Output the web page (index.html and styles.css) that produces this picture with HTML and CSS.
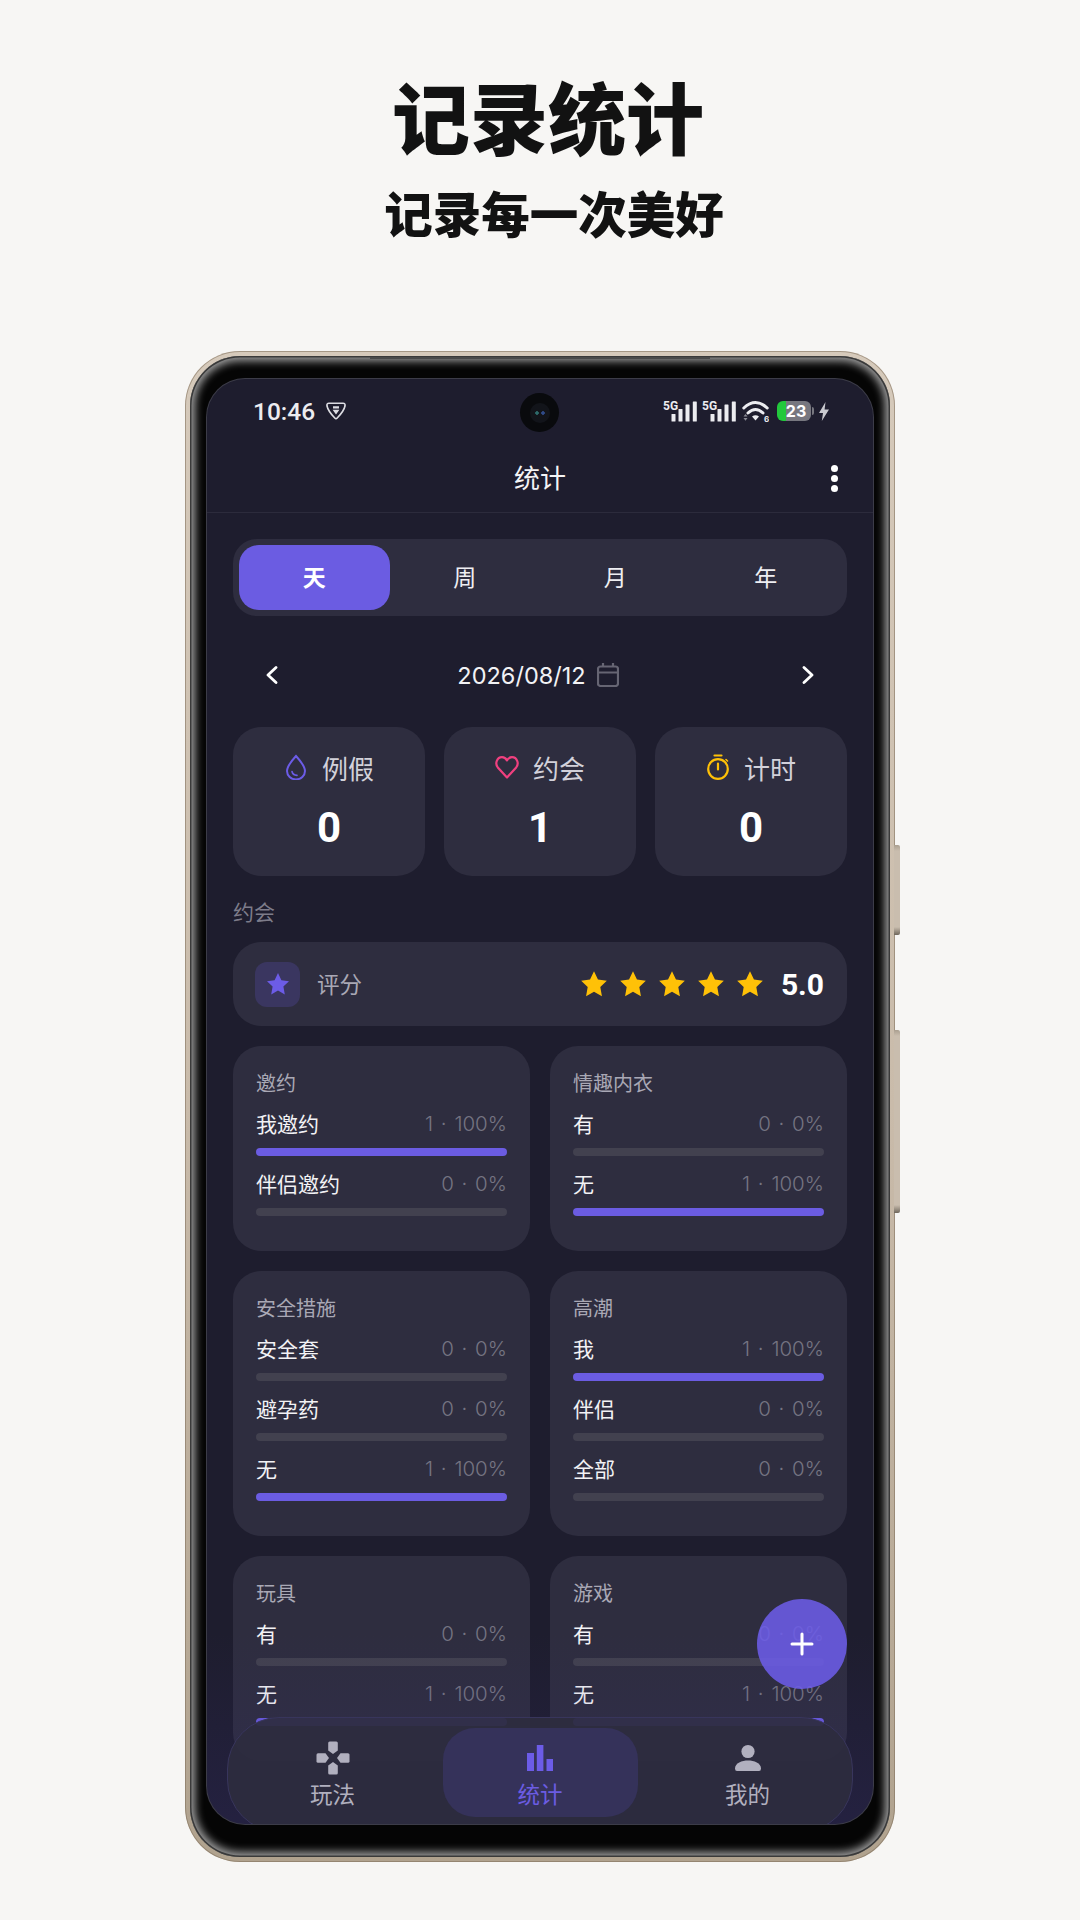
FILE: index.html
```html
<!DOCTYPE html>
<html lang="zh-CN">
<head>
    <meta charset="UTF-8">
    <meta name="viewport" content="width=device-width, initial-scale=1.0">
    <title>记录统计</title>
    <link rel="stylesheet" href="styles.css">
</head>
<body>
    <header class="promo">
        <h1>记录统计</h1>
        <h2>记录每一次美好</h2>
    </header>

    <div class="phone">
        <span class="side-btn side-btn-a"></span>
        <span class="side-btn side-btn-b"></span>
        <div class="bezel">
            <div class="screen">
                <div class="status-bar">
                    <div class="status-left">
                        <span class="clock">10:46</span>
                        <svg width="20" height="18" viewBox="0 0 20 18"><path d="M3 1.2H17Q19.4 1.2 19 4Q18 9 11.2 16Q10 17.4 8.8 16Q2 9 1 4Q.6 1.2 3 1.2Z" fill="none" stroke="#dcdce2" stroke-width="1.6"/><path d="M7 4.2H13V6.4H7ZM6.6 7.8H13.4L10 12.6Z" fill="#dcdce2"/></svg>
                    </div>
                    <div class="camera"><span class="lens"></span></div>
                    <div class="status-right">
                        <svg class="signal" width="34" height="22" viewBox="0 0 34 22"><text x="0" y="9.5">5G</text><rect x="8.5" y="14" width="4" height="7.5" rx=".6"/><rect x="15.5" y="9" width="4" height="12.5" rx=".6"/><rect x="22.5" y="4.5" width="4" height="17" rx=".6"/><rect x="29.8" y="1.5" width="4" height="20" rx=".6"/></svg>
                        <svg class="signal" width="34" height="22" viewBox="0 0 34 22"><text x="0" y="9.5">5G</text><rect x="8.5" y="14" width="4" height="7.5" rx=".6"/><rect x="15.5" y="9" width="4" height="12.5" rx=".6"/><rect x="22.5" y="4.5" width="4" height="17" rx=".6"/><rect x="29.8" y="1.5" width="4" height="20" rx=".6"/></svg>
                        <svg class="wifi" width="27" height="22" viewBox="0 0 27 22"><path d="M1.8 8Q13.5 -3 25.2 8M6 13Q13.5 6 21 13" fill="none" stroke="#ececf0" stroke-width="3" stroke-linecap="round"/><path d="M10 16.5Q13.5 14 17 16.5L13.5 20.5Z" fill="#ececf0"/><path d="M1.5 16.5L3.5 14L5.5 16.5ZM1.5 18H5.5L3.5 20.8Z" fill="#8b8b95"/><text x="22" y="21.5">6</text></svg>
                        <div class="battery">23</div>
                        <svg width="10" height="19" viewBox="0 0 10 19"><path d="M6.5 0L0 11H4L2.8 19L10 7.5H5.6Z" fill="#c9c9cf"/></svg>
                    </div>
                </div>

                <div class="app-bar">
                    <span></span>
                    <span class="app-title">统计</span>
                    <div class="more"><i></i><i></i><i></i></div>
                </div>

                <main class="content">
                    <div class="tabs">
                        <div class="tab tab-on">天</div>
                        <div class="tab">周</div>
                        <div class="tab">月</div>
                        <div class="tab">年</div>
                    </div>

                    <div class="date-row">
                        <svg width="13" height="18" viewBox="0 0 13 18"><path d="M11 1.5L3 9L11 16.5" fill="none" stroke="#fff" stroke-width="2.8" stroke-linecap="round" stroke-linejoin="round"/></svg>
                        <div class="date-mid">
                            <span>2026/08/12</span>
                            <svg width="22" height="24" viewBox="0 0 22 24" fill="none" stroke="#666573" stroke-width="2.2"><rect x="1" y="3.5" width="20" height="19.5" rx="2.5"/><path d="M1 9.5H21M6 0V4M16 0V4"/></svg>
                        </div>
                        <svg width="13" height="18" viewBox="0 0 13 18"><path d="M2 1.5L10 9L2 16.5" fill="none" stroke="#fff" stroke-width="2.8" stroke-linecap="round" stroke-linejoin="round"/></svg>
                    </div>

                    <div class="stats">
                        <div class="stat">
                            <div class="stat-head">
                                <svg width="24" height="26" viewBox="0 0 24 26" fill="none" stroke="#6c5ce7" stroke-width="2"><path d="M12 2Q3 12 3 17A9 8.4 0 0 0 21 17Q21 12 12 2Z"/><path d="M8 17.5Q8.6 21 13 21.4" stroke-width="1.6" stroke-linecap="round"/></svg>
                                <span>例假</span>
                            </div>
                            <div class="stat-num">0</div>
                        </div>
                        <div class="stat">
                            <div class="stat-head">
                                <svg width="24" height="26" viewBox="0 0 24 26" fill="none" stroke="#f0407f" stroke-width="2.2"><path d="M12 23.5L2.8 13.4C-.4 9.4 2 3.2 7 3.2C9.4 3.2 11 4.6 12 6.4C13 4.6 14.6 3.2 17 3.2C22 3.2 24.4 9.4 21.2 13.4Z" stroke-linejoin="round"/></svg>
                                <span>约会</span>
                            </div>
                            <div class="stat-num">1</div>
                        </div>
                        <div class="stat">
                            <div class="stat-head">
                                <svg width="24" height="26" viewBox="0 0 24 26" fill="none" stroke="#ffc107" stroke-width="2.2"><circle cx="12" cy="15" r="9.8"/><path d="M8.5 1.5H15.5M12 9.5V15.5" stroke-linecap="round"/><path d="M20 5.5L21.5 7" stroke-linecap="round" stroke-width="1.6"/></svg>
                                <span>计时</span>
                            </div>
                            <div class="stat-num">0</div>
                        </div>
                    </div>

                    <div class="section-label">约会</div>

                    <div class="rating">
                        <div class="rating-icon">
                            <svg width="24" height="24" viewBox="0 0 24 24"><path d="M12 1l3.4 7.2 7.6 1-5.6 5.4 1.4 7.8L12 18.6 5.2 22.4l1.4-7.8L1 9.2l7.6-1z" fill="#6c5ce7"/></svg>
                        </div>
                        <span class="rating-name">评分</span>
                        <div class="stars">
                            <svg width="28" height="28" viewBox="0 0 24 24"><path d="M12 1l3.4 7.2 7.6 1-5.6 5.4 1.4 7.8L12 18.6 5.2 22.4l1.4-7.8L1 9.2l7.6-1z"/></svg>
                            <svg width="28" height="28" viewBox="0 0 24 24"><path d="M12 1l3.4 7.2 7.6 1-5.6 5.4 1.4 7.8L12 18.6 5.2 22.4l1.4-7.8L1 9.2l7.6-1z"/></svg>
                            <svg width="28" height="28" viewBox="0 0 24 24"><path d="M12 1l3.4 7.2 7.6 1-5.6 5.4 1.4 7.8L12 18.6 5.2 22.4l1.4-7.8L1 9.2l7.6-1z"/></svg>
                            <svg width="28" height="28" viewBox="0 0 24 24"><path d="M12 1l3.4 7.2 7.6 1-5.6 5.4 1.4 7.8L12 18.6 5.2 22.4l1.4-7.8L1 9.2l7.6-1z"/></svg>
                            <svg width="28" height="28" viewBox="0 0 24 24"><path d="M12 1l3.4 7.2 7.6 1-5.6 5.4 1.4 7.8L12 18.6 5.2 22.4l1.4-7.8L1 9.2l7.6-1z"/></svg>
                        </div>
                        <span class="rating-score">5.0</span>
                    </div>

                    <div class="grid">
                        <section class="card">
                            <h3>邀约</h3>
                            <div class="row"><span>我邀约</span><em>1 · 100%</em></div>
                            <div class="bar"><div class="fill"></div></div>
                            <div class="row"><span>伴侣邀约</span><em>0 · 0%</em></div>
                            <div class="bar"></div>
                        </section>
                        <section class="card">
                            <h3>情趣内衣</h3>
                            <div class="row"><span>有</span><em>0 · 0%</em></div>
                            <div class="bar"></div>
                            <div class="row"><span>无</span><em>1 · 100%</em></div>
                            <div class="bar"><div class="fill"></div></div>
                        </section>
                        <section class="card">
                            <h3>安全措施</h3>
                            <div class="row"><span>安全套</span><em>0 · 0%</em></div>
                            <div class="bar"></div>
                            <div class="row"><span>避孕药</span><em>0 · 0%</em></div>
                            <div class="bar"></div>
                            <div class="row"><span>无</span><em>1 · 100%</em></div>
                            <div class="bar"><div class="fill"></div></div>
                        </section>
                        <section class="card">
                            <h3>高潮</h3>
                            <div class="row"><span>我</span><em>1 · 100%</em></div>
                            <div class="bar"><div class="fill"></div></div>
                            <div class="row"><span>伴侣</span><em>0 · 0%</em></div>
                            <div class="bar"></div>
                            <div class="row"><span>全部</span><em>0 · 0%</em></div>
                            <div class="bar"></div>
                        </section>
                        <section class="card">
                            <h3>玩具</h3>
                            <div class="row"><span>有</span><em>0 · 0%</em></div>
                            <div class="bar"></div>
                            <div class="row"><span>无</span><em>1 · 100%</em></div>
                            <div class="bar"><div class="fill"></div></div>
                        </section>
                        <section class="card">
                            <h3>游戏</h3>
                            <div class="row"><span>有</span><em>0 · 0%</em></div>
                            <div class="bar"></div>
                            <div class="row"><span>无</span><em>1 · 100%</em></div>
                            <div class="bar"><div class="fill"></div></div>
                        </section>
                    </div>
                </main>

                <div class="scrim"></div>

                <button class="fab" type="button">
                    <svg width="24" height="24" viewBox="0 0 24 24"><path d="M12 2V22M2 12H22" stroke="#fff" stroke-width="3" stroke-linecap="round"/></svg>
                </button>

                <nav class="nav">
                    <div class="nav-item">
                        <svg width="34" height="34" viewBox="0 0 34 34" fill="#b1b0bf">
                            <path d="M12.2 2Q12.2 .5 13.7 .5H20.3Q21.8 .5 21.8 2V9.5L17 13L12.2 9.5Z"/>
                            <path transform="rotate(90 17 17)" d="M12.2 2Q12.2 .5 13.7 .5H20.3Q21.8 .5 21.8 2V9.5L17 13L12.2 9.5Z"/>
                            <path transform="rotate(180 17 17)" d="M12.2 2Q12.2 .5 13.7 .5H20.3Q21.8 .5 21.8 2V9.5L17 13L12.2 9.5Z"/>
                            <path transform="rotate(270 17 17)" d="M12.2 2Q12.2 .5 13.7 .5H20.3Q21.8 .5 21.8 2V9.5L17 13L12.2 9.5Z"/>
                        </svg>
                        <span>玩法</span>
                    </div>
                    <div class="nav-item nav-on">
                        <svg width="26" height="34" viewBox="0 0 26 34" fill="#6c5ce7"><rect x="0" y="12" width="7" height="18"/><rect x="9.8" y="4" width="6.6" height="26"/><rect x="19.5" y="18" width="6.5" height="12"/></svg>
                        <span>统计</span>
                    </div>
                    <div class="nav-item">
                        <svg width="26" height="34" viewBox="0 0 26 34" fill="#b1b0bf"><circle cx="13" cy="10.5" r="6.6"/><path d="M0 27.5C0 22 7 19.5 13 19.5S26 22 26 27.5Q26 30 24 30H2Q0 30 0 27.5Z"/></svg>
                        <span>我的</span>
                    </div>
                </nav>
            </div>
        </div>
    </div>
</body>
</html>
```
FILE: styles.css
```css
* {
    box-sizing: border-box;
}

body {
    margin: 0;
    width: 1080px;
    height: 1920px;
    overflow: hidden;
    background-color: #f7f6f4;
    font-family: Inter, 'Noto Sans CJK SC', sans-serif;
    color: #fff;
}

.promo {
    padding-top: 72px;
    text-align: center;
    color: #121212;
}

.promo h1 {
    margin: 0;
    padding-left: 16px;
    font-size: 78px;
    line-height: 98px;
    font-weight: 900;
}

.promo h2 {
    margin: 16px 0 0;
    padding-left: 28px;
    font-size: 48.5px;
    line-height: 60px;
    font-weight: 900;
}

/* phone frame */
.phone {
    position: relative;
    width: 710px;
    height: 1511px;
    margin: 105px auto 0;
    padding: 5px;
    border-radius: 55px;
    background: linear-gradient(180deg, #d6cabb, #c9bbaa 50%, #b0a28e);
    box-shadow: inset 0 0 0 1px rgba(125, 110, 90, 0.55);
}

.phone::before {
    content: "";
    position: absolute;
    top: 6px;
    left: 185px;
    width: 340px;
    height: 2px;
    background-color: #4a4a4a;
}

.side-btn {
    position: absolute;
    left: 709px;
    width: 6px;
    border-radius: 0 2px 2px 0;
    background: linear-gradient(180deg, #aa9f90 0, #c9bdae 6px, #c9bdae calc(100% - 8px), #6f675c 100%);
}

.side-btn-a {
    top: 494px;
    height: 90px;
}

.side-btn-b {
    top: 679px;
    height: 183px;
}

.bezel {
    height: 100%;
    padding: 23px 17px 33px;
    border-radius: 50px;
    background-color: #050505;
    box-shadow: inset 0 0 0 1.5px #3a3a3a, inset 0 0 9px 5px rgba(200, 200, 200, 0.8);
}

.screen {
    position: relative;
    height: 100%;
    overflow: hidden;
    border-radius: 38px;
    background-color: #1e1d2e;
    box-shadow: 0 0 0 1px #3c3c48;
}

/* status bar */
.status-bar {
    position: relative;
    display: flex;
    justify-content: space-between;
    align-items: center;
    height: 66px;
    padding: 0 44px 2px 46px;
}

.status-left {
    display: flex;
    align-items: center;
    gap: 11px;
}

.clock {
    font-family: Roboto, sans-serif;
    font-size: 24.5px;
    font-weight: 500;
    color: #ececf0;
}

.camera {
    position: absolute;
    top: 14px;
    left: 313px;
    display: flex;
    justify-content: center;
    align-items: center;
    width: 39px;
    height: 39px;
    border-radius: 50%;
    background-color: #090a0d;
}

.lens {
    width: 20px;
    height: 20px;
    border-radius: 50%;
    background: radial-gradient(circle at 35% 50%, #2d6a6a 0, #2d6a6a 1.5px, transparent 2px), radial-gradient(circle at 65% 50%, #2f4a88 0, #2f4a88 1.5px, transparent 2px), #12141a;
}

.status-right {
    display: flex;
    align-items: center;
    gap: 5px;
}

.signal {
    fill: #ececf0;
}

.signal text {
    font-family: Roboto, sans-serif;
    font-size: 12px;
    font-weight: 700;
}

.wifi {
    margin: 0 3px 0 1px;
}

.wifi text {
    font-size: 8px;
    font-weight: 700;
    fill: #ececf0;
}

.battery {
    position: relative;
    width: 34px;
    height: 20px;
    margin-right: 3px;
    padding-left: 4px;
    border-radius: 6px;
    background: linear-gradient(90deg, #22c83c 9px, #77777f 9px);
    font-size: 16px;
    font-weight: 700;
    line-height: 20px;
    text-align: center;
    color: #fff;
}

.battery::after {
    content: "";
    position: absolute;
    top: 6px;
    right: -3px;
    width: 2px;
    height: 8px;
    border-radius: 0 2px 2px 0;
    background-color: #77777f;
}

/* app bar */
.app-bar {
    display: grid;
    grid-template-columns: 1fr auto 1fr;
    align-items: center;
    height: 68px;
    padding: 0 35px;
    border-bottom: 1px solid #2c2b3c;
}

.app-title {
    padding-bottom: 5px;
    font-size: 26px;
    color: #f4f4f6;
}

.more {
    display: flex;
    flex-direction: column;
    gap: 3px;
    justify-self: end;
}

.more i {
    display: block;
    width: 7px;
    height: 7px;
    border-radius: 50%;
    background-color: #fff;
}

/* content */
.content {
    padding: 26px 26px 0;
}

.tabs {
    display: grid;
    grid-template-columns: repeat(4, 1fr);
    height: 77px;
    padding: 6px;
    border-radius: 24px;
    background-color: #2e2d3f;
}

.tab {
    display: flex;
    justify-content: center;
    align-items: center;
    padding-bottom: 4px;
    border-radius: 20px;
    font-size: 23px;
    color: #eeeef2;
}

.tab-on {
    background-color: #6b5ce2;
    font-weight: 700;
    color: #fff;
}

.date-row {
    display: flex;
    justify-content: space-between;
    align-items: center;
    height: 60px;
    margin-top: 29px;
    padding: 0 32px;
}

.date-mid {
    display: flex;
    align-items: center;
    gap: 11px;
    margin-right: 4px;
    font-size: 23.5px;
    color: #f2f2f5;
}

.stats {
    display: grid;
    grid-template-columns: repeat(3, 1fr);
    gap: 19px;
    margin-top: 22px;
}

.stat {
    height: 149px;
    padding-top: 23px;
    border-radius: 28px;
    background-color: #2e2d3f;
    text-align: center;
}

.stat-head {
    display: flex;
    justify-content: center;
    align-items: center;
    gap: 14px;
    height: 34px;
    font-size: 26px;
    color: #d2d1da;
}

.stat-num {
    margin-top: 20px;
    font-family: Roboto, sans-serif;
    font-size: 42px;
    line-height: 48px;
    font-weight: 700;
}

.section-label {
    margin-top: 23px;
    font-size: 21px;
    line-height: 28px;
    color: #7d7c8a;
}

.rating {
    display: flex;
    align-items: center;
    height: 84px;
    margin-top: 15px;
    padding: 0 23px 0 22px;
    border-radius: 28px;
    background-color: #2e2d3f;
}

.rating-icon {
    display: flex;
    justify-content: center;
    align-items: center;
    width: 45px;
    height: 45px;
    border-radius: 12px;
    background-color: #3a3660;
}

.rating-name {
    margin-left: 17px;
    padding-bottom: 2px;
    font-size: 22.5px;
    color: #a9a8b5;
}

.stars {
    display: flex;
    gap: 11px;
    margin-left: auto;
    fill: #ffc107;
}

.rating-score {
    margin-left: 17px;
    font-family: Roboto, sans-serif;
    font-size: 30px;
    font-weight: 700;
}

.grid {
    display: grid;
    grid-template-columns: 1fr 1fr;
    gap: 20px;
    margin-top: 20px;
}

.card {
    padding: 26px 23px 35px;
    border-radius: 28px;
    background-color: #2e2d3f;
}

.card h3 {
    margin: 0;
    font-size: 20px;
    line-height: 24px;
    font-weight: 400;
    color: #a9a8b5;
}

.row {
    display: flex;
    justify-content: space-between;
    align-items: center;
    height: 28px;
    margin-top: 13px;
    font-size: 21px;
    color: #f2f2f5;
}

.row em {
    padding-top: 1px;
    font-size: 20.5px;
    font-style: normal;
    font-weight: 300;
    word-spacing: 2px;
    color: #757482;
}

.bar {
    height: 8px;
    margin-top: 11px;
    overflow: hidden;
    border-radius: 4px;
    background-color: #42414f;
}

.fill {
    height: 100%;
    background-color: #6b5ce2;
}

/* overlays */
.scrim {
    position: absolute;
    left: 0;
    right: 0;
    bottom: 0;
    height: 190px;
    background: linear-gradient(180deg, rgba(58, 48, 130, 0), rgba(58, 48, 130, 0.22));
}

.fab {
    position: absolute;
    right: 26px;
    bottom: 135px;
    display: flex;
    justify-content: center;
    align-items: center;
    width: 90px;
    height: 90px;
    padding: 0;
    border: none;
    border-radius: 50%;
    background-color: rgba(108, 92, 231, 0.88);
}

.nav {
    position: absolute;
    left: 20px;
    right: 20px;
    bottom: -8px;
    display: flex;
    justify-content: space-between;
    height: 115px;
    padding: 10px 7px 0;
    border: 1px solid #38355c;
    border-radius: 52px;
    background-color: rgba(45, 44, 62, 0.93);
}

.nav-item {
    display: flex;
    flex-direction: column;
    align-items: center;
    width: 195px;
    height: 89px;
    padding-top: 13px;
    border-radius: 32px;
    font-size: 22.5px;
    line-height: 28px;
    color: #b1b0bf;
}

.nav-item span {
    margin-top: 6px;
}

.nav-on {
    background-color: #35325a;
    color: #6b5ce2;
}
```
